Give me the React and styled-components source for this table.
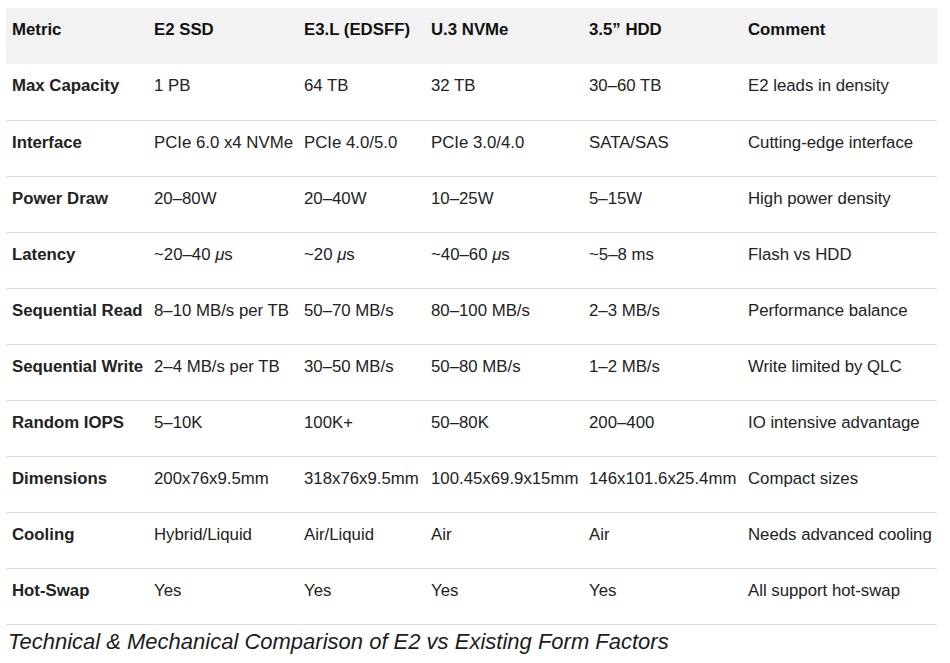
import React from 'react';
import styled, { createGlobalStyle } from 'styled-components';

const GlobalStyle = createGlobalStyle`
  body {
    margin: 0;
    background: #ffffff;
    font-family: "Liberation Sans", Arial, sans-serif;
  }
`;

const columns = [
  { label: 'Metric', width: 142 },
  { label: 'E2 SSD', width: 150 },
  { label: 'E3.L (EDSFF)', width: 127 },
  { label: 'U.3 NVMe', width: 158 },
  { label: '3.5\u201D HDD', width: 159 },
  { label: 'Comment', width: 195 },
];

const rows = [
  ['Max Capacity', '1 PB', '64 TB', '32 TB', '30\u201360 TB', 'E2 leads in density'],
  ['Interface', 'PCIe 6.0 x4 NVMe', 'PCIe 4.0/5.0', 'PCIe 3.0/4.0', 'SATA/SAS', 'Cutting-edge interface'],
  ['Power Draw', '20\u201380W', '20\u201340W', '10\u201325W', '5\u201315W', 'High power density'],
  ['Latency', ['~20\u201340 ', 'μ', 's'], ['~20 ', 'μ', 's'], ['~40\u201360 ', 'μ', 's'], '~5\u20138 ms', 'Flash vs HDD'],
  ['Sequential Read', '8\u201310 MB/s per TB', '50\u201370 MB/s', '80\u2013100 MB/s', '2\u20133 MB/s', 'Performance balance'],
  ['Sequential Write', '2\u20134 MB/s per TB', '30\u201350 MB/s', '50\u201380 MB/s', '1\u20132 MB/s', 'Write limited by QLC'],
  ['Random IOPS', '5\u201310K', '100K+', '50\u201380K', '200\u2013400', 'IO intensive advantage'],
  ['Dimensions', '200x76x9.5mm', '318x76x9.5mm', '100.45x69.9x15mm', '146x101.6x25.4mm', 'Compact sizes'],
  ['Cooling', 'Hybrid/Liquid', 'Air/Liquid', 'Air', 'Air', 'Needs advanced cooling'],
  ['Hot-Swap', 'Yes', 'Yes', 'Yes', 'Yes', 'All support hot-swap'],
];

const Page = styled.div`
  padding: 8px 13px 0 6px;
`;

const Table = styled.table`
  width: 931px;
  border-collapse: collapse;
  table-layout: fixed;
  font-size: 16.8px;
  line-height: 20px;
`;

const HeadCell = styled.th`
  height: 56px;
  box-sizing: border-box;
  padding: 12px 6px;
  vertical-align: top;
  text-align: left;
  font-weight: 700;
  color: #111;
  background: #f2f2f2;
  white-space: nowrap;
`;

const Row = styled.tr`
  border-bottom: 1px solid #dcdcdc;
`;

const Cell = styled.td`
  height: 56px;
  box-sizing: border-box;
  padding: 12px 6px;
  vertical-align: top;
  color: #222;
  font-weight: ${(p) => (p.$label ? 700 : 400)};
  white-space: nowrap;
`;

const Caption = styled.p`
  margin: 4px 0 0 2px;
  font-size: 22px;
  line-height: 26px;
  font-style: italic;
  color: #1c1c1c;
`;

const renderValue = (value) => {
  if (Array.isArray(value)) {
    return (
      <>
        {value[0]}
        <i>{value[1]}</i>
        {value[2]}
      </>
    );
  }
  return value;
};

export default function App() {
  return (
    <Page>
      <GlobalStyle />
      <Table>
        <colgroup>
          {columns.map((c) => (
            <col key={c.label} style={{ width: c.width }} />
          ))}
        </colgroup>
        <thead>
          <tr>
            {columns.map((c) => (
              <HeadCell key={c.label}>{c.label}</HeadCell>
            ))}
          </tr>
        </thead>
        <tbody>
          {rows.map((row) => (
            <Row key={row[0]}>
              {row.map((value, i) => (
                <Cell key={i} $label={i === 0}>
                  {renderValue(value)}
                </Cell>
              ))}
            </Row>
          ))}
        </tbody>
      </Table>
      <Caption>Technical &amp; Mechanical Comparison of E2 vs Existing Form Factors</Caption>
    </Page>
  );
}
